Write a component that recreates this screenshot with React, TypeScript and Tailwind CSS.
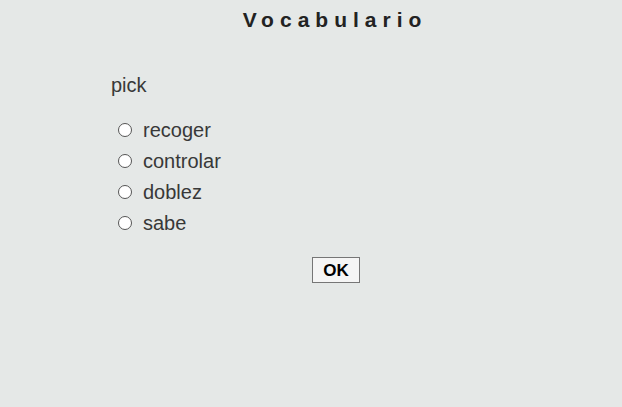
export default function App() {
  const options = ["recoger", "controlar", "doblez", "sabe"];
  return (
    <div className="min-h-[407px] w-full bg-[#e5e8e7] pl-12 font-['Liberation_Sans',Arial,sans-serif] text-[#383838]">
      <h1 className="pt-[8px] text-center text-[21px] font-bold leading-[24px] tracking-[6px] text-[#222]">
        Vocabulario
      </h1>
      <div className="mt-[41px] pl-[63px]">
        <p className="text-[20px] leading-[24px]">pick</p>
        <div className="mt-[17px] flex flex-col">
          {options.map((o) => (
            <label key={o} className="flex h-[31px] items-center">
              <span className="ml-[7px] box-border h-[14px] w-[14px] rounded-full border border-[#555] bg-white" />
              <span className="ml-[11px] text-[20px] leading-[24px]">{o}</span>
            </label>
          ))}
        </div>
      </div>
      <div className="mt-[19px] flex justify-center pl-[2px]">
        <button className="h-[26px] w-[48px] border border-[#767676] bg-[#f5f5f5] text-[17px] font-bold leading-none text-black">
          OK
        </button>
      </div>
    </div>
  );
}
